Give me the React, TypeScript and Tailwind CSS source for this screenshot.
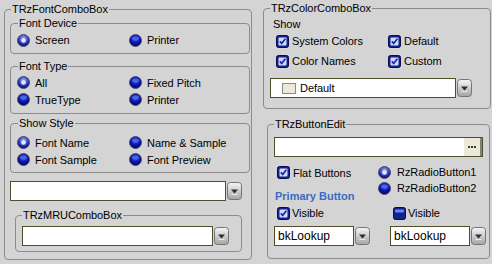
import React from "react";

function Radio({ on }: { on?: boolean }) {
  const id = on ? "ron" : "roff";
  return (
    <svg width="13" height="13" viewBox="0 0 13 13" className="shrink-0">
      <defs>
        <radialGradient id={id + "g"} cx="50%" cy="35%" r="65%">
          <stop offset="0%" stopColor={on ? "#b8c0f0" : "#3a52e8"} />
          <stop offset="55%" stopColor={on ? "#3444c0" : "#0c16b0"} />
          <stop offset="100%" stopColor="#000062" />
        </radialGradient>
      </defs>
      <circle cx="6.5" cy="6.5" r="6" fill={`url(#${id}g)`} stroke="#4e4e6e" strokeWidth="1" />
      {on ? (
        <circle cx="6.5" cy="6.5" r="2.3" fill="#e4e8ff" />
      ) : (
        <ellipse cx="6.5" cy="4.6" rx="3.6" ry="2.2" fill="#5470f0" opacity="0.7" />
      )}
    </svg>
  );
}

function Check({ on = true }: { on?: boolean }) {
  return (
    <svg width="13" height="13" viewBox="0 0 13 13" className="shrink-0">
      <rect x="0.5" y="0.5" width="12" height="12" rx="2" fill="#14228e" stroke="#0a0a50" />
      {on ? (
        <>
          <rect x="2.5" y="2.5" width="8" height="8" rx="1" fill="#d2daff" />
          <path d="M3.8 6.4 L5.7 8.4 L9.4 3.8" fill="none" stroke="#1a2aa0" strokeWidth="1.7" />
        </>
      ) : (
        <rect x="2" y="2.5" width="9" height="3" rx="1" fill="#7a96ff" opacity="0.85" />
      )}
    </svg>
  );
}

function DropBtn() {
  return (
    <svg width="15" height="18" viewBox="0 0 15 18" className="shrink-0">
      <defs>
        <linearGradient id="dbg" x1="0" y1="0" x2="0" y2="1">
          <stop offset="0%" stopColor="#f6f6f6" />
          <stop offset="100%" stopColor="#a4a4a4" />
        </linearGradient>
      </defs>
      <rect x="0.5" y="0.5" width="14" height="17" rx="3" fill="url(#dbg)" stroke="#747474" />
      <path d="M4 7.5 L11 7.5 L7.5 11.5 Z" fill="#2e2e2e" />
      <path d="M4.5 12.5 L10.5 12.5" stroke="#ffffff" strokeWidth="1" opacity="0.7" />
    </svg>
  );
}

function Combo({ w, children }: { w: string; children?: React.ReactNode }) {
  return (
    <div className="flex items-center gap-[1px] h-[20px]">
      <div className={`${w} h-[20px] bg-white border border-[#4e4e2a] flex items-center`}>{children}</div>
      <DropBtn />
    </div>
  );
}

function Field({
  title,
  className,
  legendClass = "",
  children,
}: {
  title: string;
  className: string;
  legendClass?: string;
  children: React.ReactNode;
}) {
  return (
    <fieldset className={`border border-[#8c8c8c] rounded-[4px] ${className}`}>
      <legend className={`px-[1px] leading-[14px] ${legendClass}`}>{title}</legend>
      {children}
    </fieldset>
  );
}

function RItem({ on, label, gap = "gap-[5px]" }: { on?: boolean; label: string; gap?: string }) {
  return (
    <div className={`flex items-center ${gap}`}>
      <Radio on={on} />
      <span>{label}</span>
    </div>
  );
}

function CItem({ on = true, label, gap = "gap-[3px]" }: { on?: boolean; label: string; gap?: string }) {
  return (
    <div className={`flex items-center ${gap}`}>
      <Check on={on} />
      <span>{label}</span>
    </div>
  );
}

export default function App() {
  return (
    <div className="w-[492px] h-[264px] bg-[#d4d4d4] flex font-['Liberation_Sans',Arial,sans-serif] text-[11px] tracking-[-0.05px] leading-[14px] text-black overflow-hidden">
      {/* Left column */}
      <Field title="TRzFontComboBox" className="ml-[4px] mt-[2px] w-[248px] h-[258px] pl-[5px] pr-[1px]" legendClass="ml-[1px]">
        <div className="flex flex-col">
          <Field title="Font Device" className="w-[240px] pl-[6px] pt-[2px] pb-[5px]" legendClass="ml-[1px]">
            <div className="grid grid-cols-[112px_1fr] h-[16px] items-center">
              <RItem on label="Screen" />
              <RItem label="Printer" />
            </div>
          </Field>
          <Field title="Font Type" className="mt-[5px] w-[240px] pl-[6px] pt-[1px] pb-[5px]" legendClass="ml-[1px]">
            <div className="grid grid-cols-[112px_1fr] auto-rows-[17px] items-center">
              <RItem on label="All" />
              <RItem label="Fixed Pitch" />
              <RItem label="TrueType" />
              <RItem label="Printer" />
            </div>
          </Field>
          <Field title="Show Style" className="mt-[2px] w-[240px] pl-[6px] pt-[4px] pb-[4px]" legendClass="ml-[1px]">
            <div className="grid grid-cols-[112px_1fr] auto-rows-[17px] items-center">
              <RItem on label="Font Name" />
              <RItem label="Name & Sample" />
              <RItem label="Font Sample" />
              <RItem label="Font Preview" />
            </div>
          </Field>
          <div className="mt-[8px]">
            <Combo w="w-[216px]" />
          </div>
          <Field title="TRzMRUComboBox" className="mt-[7px] ml-[5px] w-[227px] pl-[6px] pt-[4px] pb-[5px]">
            <Combo w="w-[191px]" />
          </Field>
        </div>
      </Field>

      {/* Right column */}
      <div className="flex flex-col ml-[11px]">
        <Field title="TRzColorComboBox" className="mt-[1px] w-[228px] pl-[6px] pb-[10px]">
          <div className="ml-[3px] mt-[2px] h-[14px]">Show</div>
          <div className="ml-[6px] grid grid-cols-[112px_1fr] auto-rows-[20px] items-center">
            <CItem label="System Colors" />
            <CItem label="Default" />
            <CItem label="Color Names" />
            <CItem label="Custom" />
          </div>
          <div className="mt-[7px]">
            <Combo w="w-[186px]">
              <div className="ml-[11px] w-[14px] h-[11px] bg-[#ece9d8] border border-[#8a8a8a]" />
              <span className="ml-[4px]">Default</span>
            </Combo>
          </div>
        </Field>

        <Field title="TRzButtonEdit" className="mt-[8px] ml-[4px] w-[223px] pl-[6px] pt-[6px] pb-[12px]">
          <div className="w-[209px] h-[20px] bg-white border border-[#4e4e2a] flex justify-end items-stretch">
            <div className="w-[19px] bg-[#ece9d8] border-l border-white border-r-2 border-r-[#808080] flex items-center justify-center gap-[1px]">
              <div className="w-[2px] h-[2px] bg-[#333]" />
              <div className="w-[2px] h-[2px] bg-[#333]" />
              <div className="w-[2px] h-[2px] bg-[#333]" />
            </div>
          </div>

          <div className="mt-[7px] flex">
            <div className="w-[104px] flex flex-col">
              <div className="h-[17px] ml-[3px] flex items-center">
                <CItem label="Flat Buttons" />
              </div>
              <div className="h-[16px] mt-[7px] ml-[1px] flex items-center font-bold tracking-[0px] text-[#3a6cc6]">
                Primary Button
              </div>
            </div>
            <div className="flex flex-col">
              <div className="h-[16px] flex items-center">
                <RItem on label="RzRadioButton1" gap="gap-[6px]" />
              </div>
              <div className="h-[16px] flex items-center">
                <RItem label="RzRadioButton2" gap="gap-[6px]" />
              </div>
            </div>
          </div>

          <div className="mt-[1px] h-[16px] flex items-center">
            <div className="w-[116px] pl-[3px]">
              <CItem label="Visible" gap="gap-[2px]" />
            </div>
            <div className="pl-[3px]">
              <CItem on={false} label="Visible" gap="gap-[2px]" />
            </div>
          </div>

          <div className="mt-[5px] flex">
            <Combo w="w-[80px]">
              <span className="ml-[3px] text-[12px] tracking-[0px]">bkLookup</span>
            </Combo>
            <div className="ml-[20px]">
              <Combo w="w-[80px]">
                <span className="ml-[3px] text-[12px] tracking-[0px]">bkLookup</span>
              </Combo>
            </div>
          </div>
        </Field>
      </div>
    </div>
  );
}
